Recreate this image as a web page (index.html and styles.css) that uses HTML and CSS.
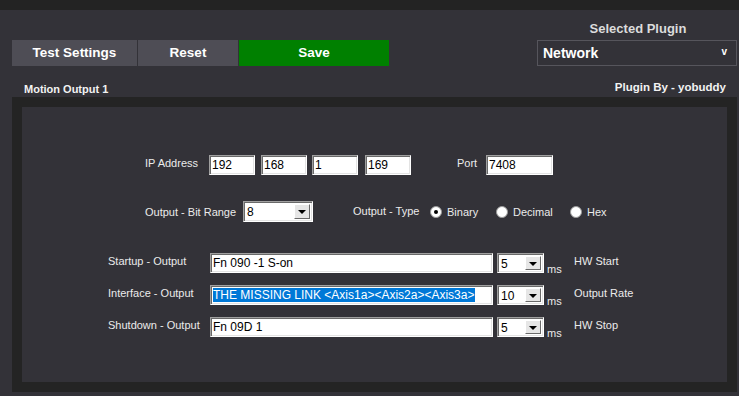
FILE: index.html
```html
<!DOCTYPE html>
<html lang="en">
<head>
    <meta charset="UTF-8">
    <title>Motion Output</title>
    <link rel="stylesheet" href="styles.css">
</head>
<body>
    <div class="topbar"></div>

    <div class="header">
        <div class="btn-row">
            <div class="btn btn-test">Test Settings</div>
            <div class="btn btn-reset">Reset</div>
            <div class="btn btn-save">Save</div>
        </div>
        <div class="plugin">
            <div class="plugin-title">Selected Plugin</div>
            <div class="plugin-select">
                <span>Network</span>
                <span class="plugin-caret">v</span>
            </div>
        </div>
    </div>

    <div class="subheader">
        <span class="section-title">Motion Output 1</span>
        <span class="plugin-by">Plugin By - yobuddy</span>
    </div>

    <div class="panel">
        <div class="inner">
            <!-- ip + port -->
            <div class="row row-ip">
                <span class="label label-ip">IP Address</span>
                <div class="field field-ip ip1">192</div>
                <div class="field field-ip ip2">168</div>
                <div class="field field-ip ip3">1</div>
                <div class="field field-ip">169</div>
                <span class="label label-port">Port</span>
                <div class="field field-port">7408</div>
            </div>

            <!-- bit range + type -->
            <div class="row row-bits">
                <span class="label label-bits">Output - Bit Range</span>
                <div class="combo combo-bits">
                    <span class="combo-value">8</span>
                    <span class="combo-btn"><i class="tri"></i></span>
                </div>
                <span class="label label-type">Output - Type</span>
                <div class="option option-binary">
                    <span class="radio checked"></span>
                    <span class="label">Binary</span>
                </div>
                <div class="option option-decimal">
                    <span class="radio"></span>
                    <span class="label">Decimal</span>
                </div>
                <div class="option">
                    <span class="radio"></span>
                    <span class="label">Hex</span>
                </div>
            </div>

            <!-- output strings -->
            <div class="outputs">
                <div class="row out-row">
                    <span class="label label-out">Startup - Output</span>
                    <div class="field field-out">Fn 090 -1 S-on</div>
                    <div class="combo combo-ms">
                        <span class="combo-value">5</span>
                        <span class="combo-btn"><i class="tri"></i></span>
                    </div>
                    <span class="ms">ms</span>
                    <span class="label">HW Start</span>
                </div>
                <div class="row out-row">
                    <span class="label label-out">Interface - Output</span>
                    <div class="field field-out"><span class="selected">THE MISSING LINK &lt;Axis1a&gt;&lt;Axis2a&gt;&lt;Axis3a&gt;</span></div>
                    <div class="combo combo-ms">
                        <span class="combo-value">10</span>
                        <span class="combo-btn"><i class="tri"></i></span>
                    </div>
                    <span class="ms">ms</span>
                    <span class="label">Output Rate</span>
                </div>
                <div class="row out-row">
                    <span class="label label-out">Shutdown - Output</span>
                    <div class="field field-out">Fn 09D 1</div>
                    <div class="combo combo-ms">
                        <span class="combo-value">5</span>
                        <span class="combo-btn"><i class="tri"></i></span>
                    </div>
                    <span class="ms">ms</span>
                    <span class="label">HW Stop</span>
                </div>
            </div>
        </div>
    </div>
</body>
</html>
```

FILE: styles.css
```css
body {
    margin: 0;
    background-color: #333238;
    font-family: "Liberation Sans", Arial, sans-serif;
    color: #e8e8e8;
    overflow: hidden;
}
.topbar {
    height: 10px;
    background: #232323;
}
.header {
    display: flex;
    justify-content: space-between;
    padding: 0 2px 0 12px;
}
.btn-row {
    display: flex;
    gap: 1px;
    margin-top: 30px;
}
.btn {
    height: 26px;
    line-height: 26px;
    text-align: center;
    font-size: 13.5px;
    font-weight: bold;
    color: #fff;
    background: #4e4d55;
}
.btn-test {
    width: 125px;
}
.btn-reset {
    width: 100px;
}
.btn-save {
    width: 150px;
    background: #008000;
}
.plugin {
    width: 200px;
    margin-top: 11px;
}
.plugin-title {
    text-align: center;
    font-size: 13px;
    font-weight: bold;
    line-height: 16px;
    margin-bottom: 3px;
    padding-left: 2px;
    color: #dcdcdc;
}
.plugin-select {
    height: 24px;
    border: 1px solid #56555c;
    display: flex;
    justify-content: space-between;
    align-items: center;
    padding: 0 9px 0 5px;
    font-size: 14px;
    font-weight: bold;
    color: #fff;
}
.plugin-caret {
    font-size: 10px;
    margin-top: -3px;
}
.subheader {
    height: 31px;
    display: flex;
    justify-content: space-between;
    padding: 0 13px 0 24px;
    font-weight: bold;
    color: #f2f2f2;
}
.section-title {
    font-size: 11px;
    line-height: 13px;
    padding-top: 17px;
}
.plugin-by {
    font-size: 11.5px;
    line-height: 14px;
    padding-top: 14px;
}
.panel {
    margin: 0 2px 0 12px;
    padding: 10px;
    background: #242424;
}
.inner {
    height: 275px;
    background: #333238;
    padding-top: 48px;
    box-sizing: border-box;
}
.row {
    display: flex;
    align-items: flex-start;
}
.label {
    font-size: 11px;
    line-height: 13px;
    color: #ebebeb;
    white-space: nowrap;
}
.field {
    box-sizing: border-box;
    height: 20px;
    background: #fff;
    color: #000;
    font-size: 12px;
    line-height: 16px;
    padding-left: 2px;
    border: 1px solid;
    border-color: #a0a0a0 #fff #fff #a0a0a0;
    box-shadow: inset 1px 1px #696969, inset -1px -1px #e3e3e3;
    padding-top: 1px;
    white-space: nowrap;
    overflow: hidden;
}
.row-ip {
    margin-left: 123px;
}
.label-ip {
    width: 64px;
    padding-top: 2px;
}
.field-ip {
    width: 46px;
}
.ip1 {
    margin-right: 6px;
}
.ip2 {
    margin-right: 5px;
}
.ip3 {
    margin-right: 7px;
}
.label-port {
    width: 29px;
    margin-left: 46px;
    padding-top: 2px;
}
.field-port {
    width: 67px;
}
.row-bits {
    margin: 26px 0 0 123px;
    align-items: center;
}
.label-bits {
    width: 98px;
    padding-top: 2px;
}
.combo {
    box-sizing: border-box;
    display: flex;
    justify-content: space-between;
    background: #fff;
    color: #000;
    font-size: 12px;
    border: 1px solid;
    border-color: #a0a0a0 #fff #fff #a0a0a0;
    box-shadow: inset 1px 1px #696969, inset -1px -1px #e3e3e3;
    padding: 2px;
}
.combo-value {
    line-height: 16px;
    padding-left: 1px;
}
.combo-btn {
    width: 16px;
    box-sizing: border-box;
    background: #e6e6e6;
    border: 1px solid;
    border-color: #fff #6a6a6a #6a6a6a #fff;
    display: flex;
    align-items: center;
    justify-content: center;
}
.tri {
    width: 0;
    height: 0;
    border-left: 4px solid transparent;
    border-right: 4px solid transparent;
    border-top: 4px solid #000;
    margin-top: 1px;
}
.combo-bits {
    width: 70px;
    height: 21px;
}
.label-type {
    width: 77px;
    margin-left: 40px;
}
.option {
    display: flex;
    align-items: center;
    gap: 5px;
}
.option .label {
    padding-top: 2px;
}
.option-binary {
    width: 66px;
}
.option-decimal {
    width: 74px;
}
.radio {
    width: 12px;
    height: 12px;
    box-sizing: border-box;
    border-radius: 50%;
    background: #fff;
    border: 1px solid #9a9a9a;
    display: flex;
    align-items: center;
    justify-content: center;
}
.radio.checked::after {
    content: "";
    width: 4px;
    height: 4px;
    border-radius: 50%;
    background: #000;
}
.outputs {
    margin: 31px 0 0 86px;
    display: flex;
    flex-direction: column;
    gap: 9px;
}
.label-out {
    width: 102px;
    padding-top: 2px;
}
.field-out {
    width: 283px;
}
.selected {
    background: #0078d7;
    color: #fff;
    padding-right: 1px;
}
.combo-ms {
    width: 47px;
    height: 20px;
    margin-left: 4px;
}
.out-row .label:last-child {
    padding-top: 2px;
}
.ms {
    width: 27px;
    padding-left: 3px;
    font-size: 11px;
    line-height: 13px;
    margin-top: 10px;
    color: #ebebeb;
}
```
